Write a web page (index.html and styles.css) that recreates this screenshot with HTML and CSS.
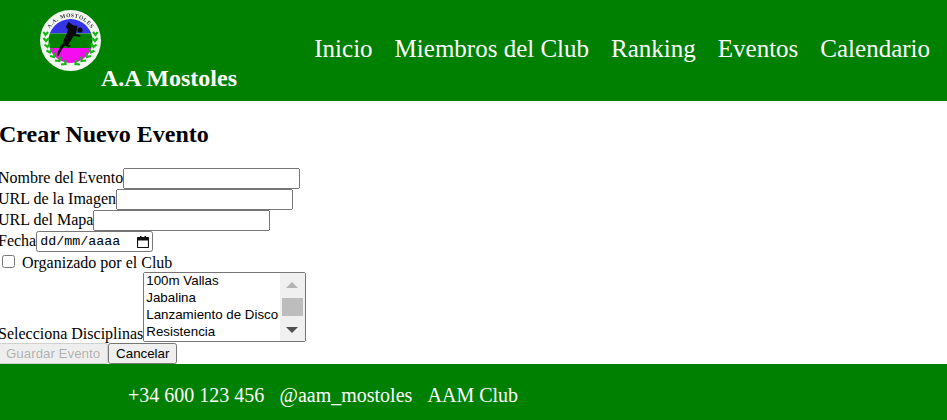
FILE: index.html
```html
<!DOCTYPE html>
<html lang="es">
<head>
<meta charset="utf-8">
<title>A.A Mostoles</title>
<link rel="stylesheet" href="styles.css">
</head>
<body>
<header class="site-header">
  <div class="brand">
    <svg class="logo" viewBox="0 0 61 61" width="61" height="61" aria-hidden="true">
      <circle cx="30.500" cy="30.500" r="30.500" fill="#f4f6f2"/>
      <clipPath id="disc"><circle cx="30.500" cy="31" r="22"/></clipPath>
      <g clip-path="url(#disc)">
        <rect x="8" y="9" width="46" height="14.500" fill="#3434e8"/>
        <rect x="8" y="23.500" width="46" height="14.500" fill="#008000"/>
        <rect x="8" y="38" width="46" height="16" fill="#f50cf0"/>
      </g>
      <g fill="#080808">
        <circle cx="40" cy="20" r="2.600"/>
        <path d="M27.500 13.500l1.200-1.500 4.300 3.200 4.500 .8-.5 2.500-1 5.500 4.500 1-.6 1.800-6.400-.8-2.800 5-2.500 3.500 2.500 1.200-.8 1.500-5-1.600-2.500 3-2.600 4.600-1.200 3-1.200-.4 .6-4.200 2.300-5 2.500-3.200 1.200-4.500 3-6 1-3.600-2.200-2.200z"/>
      </g>
      <g class="laurel" fill="none" stroke="#14b814" stroke-width="2.200">
        <path d="M3.500 22l2 3 2.500-3M3.500 28l2.500 3 3-3M4.500 34.500l3 2.500 2.500-3.500M6.500 40.500l3.500 2 2-4M10 46l4 1 1-4.500M15 50.500l4.500 .5 .5-4.500M21 54.500l4.500-.5-.5-4"/>
        <path d="M57.500 22l-2 3-2.500-3M57.500 28l-2.500 3-3-3M56.500 34.500l-3 2.500-2.500-3.500M54.500 40.500l-3.500 2-2-4M51 46l-4 1-1-4.500M46 50.500l-4.500 .5-.5-4.500M40 54.500l-4.500-.5 .5-4"/>
      </g>
      <path id="arc" d="M6.500 31a24 24 0 0 1 48 0" fill="none"/>
      <text class="logo-text"><textPath href="#arc" startOffset="50%" text-anchor="middle">A.A. MOSTOLES</textPath></text>
    </svg>
    <span class="brand-name">A.A Mostoles</span>
  </div>
  <nav class="main-nav">
    <a href="#">Inicio</a>
    <a href="#">Miembros del Club</a>
    <a href="#">Ranking</a>
    <a href="#">Eventos</a>
    <a href="#">Calendario</a>
  </nav>
</header>
<main class="content">
  <h2 class="page-title">Crear Nuevo Evento</h2>
  <form class="event-form">
    <div><label for="n">Nombre del Evento</label><input id="n" class="text-field" type="text"></div>
    <div><label for="u">URL de la Imagen</label><input id="u" class="text-field" type="text"></div>
    <div><label for="m">URL del Mapa</label><input id="m" class="text-field" type="text"></div>
    <div><label for="f">Fecha</label><span class="date-field"><input id="f" class="date-input" type="text" placeholder="dd/mm/aaaa"><svg class="cal-icon" viewBox="0 0 12 12" width="12" height="12" aria-hidden="true"><path d="M1 1.500h10a.5 .5 0 0 1 .5 .5v9a.5 .5 0 0 1-.5 .5H1a.5 .5 0 0 1-.5-.5V2a.5 .5 0 0 1 .5-.5z" fill="none" stroke="#111" stroke-width="1.200"/><rect x="0.500" y="1.500" width="11" height="3" fill="#111"/><rect x="3" y="0" width="1.500" height="2" fill="#111"/><rect x="7.500" y="0" width="1.500" height="2" fill="#111"/></svg></span></div>
    <div><label><input type="checkbox"> Organizado por el Club</label></div>
    <div class="list-row">
      <label for="d">Selecciona Disciplinas</label><select id="d" class="list-field" multiple size="4">
        <option>100m Vallas</option>
        <option>Jabalina</option>
        <option>Lanzamiento de Disco</option>
        <option>Resistencia</option>
        <option>Salto de Altura</option>
        <option>Salto de Longitud</option>
        <option>Velocidad</option>
        <option>Marcha</option>
      </select><span class="fake-scroll" aria-hidden="true"><i class="arrow-up"></i><i class="thumb"></i><i class="arrow-down"></i></span>
    </div>
    <div><button type="submit" disabled>Guardar Evento</button><button type="button">Cancelar</button></div>
  </form>
</main>
<footer class="site-footer">
  <span>+34 600 123 456</span>
  <span>@aam_mostoles</span>
  <span>AAM Club</span>
</footer>
</body>
</html>
```
FILE: styles.css
```css
html, body {
  margin: 0;
  padding: 0;
}
body {
  font-family: "Liberation Serif", serif;
  font-size: 16px;
  color: #000;
  background: #fff;
}
.site-header {
  height: 101px;
  background: #008000;
  color: #fff;
  display: flex;
  justify-content: space-between;
}
.brand {
  display: flex;
  align-items: flex-start;
  padding-left: 40px;
}
.logo {
  display: block;
  margin-top: 10px;
  flex: none;
  filter: blur(.3px);
}
.logo-text {
  font-family: "Liberation Serif", serif;
  font-size: 5.500px;
  font-weight: bold;
  fill: #333;
  letter-spacing: .5px;
}
.brand-name {
  font-size: 24px;
  font-weight: bold;
  margin-top: 64px;
  line-height: 28px;
}
.main-nav {
  display: flex;
  gap: 22px;
  padding: 34px 17px 0 0;
}
.main-nav a {
  color: #fff;
  text-decoration: none;
  font-size: 25px;
  line-height: 29px;
}
.content {
  height: 263px;
  overflow: hidden;
}
.page-title {
  font-size: 24px;
  font-weight: bold;
  margin: 19px 0 20px -1px;
  line-height: 28px;
}
.event-form {
  margin-left: -2px;
}
.text-field {
  width: 177px;
  box-sizing: border-box;
}
.date-field {
  display: inline-flex;
  align-items: center;
  box-sizing: border-box;
  width: 117px;
  height: 21px;
  border: 1px solid #767676;
  border-radius: 2.500px;
  vertical-align: 1px;
}
.date-input {
  width: 96px;
  box-sizing: border-box;
  border: 0;
  padding: 0 0 0 3px;
  outline: 0;
  font-family: "Liberation Mono", monospace;
  font-size: 13.333px;
}
.date-input::placeholder {
  color: #000;
  opacity: 1;
}
.cal-icon {
  margin-left: 4px;
  flex: none;
}
.list-row {
  position: relative;
}
.list-field {
  width: 163px;
}
.fake-scroll {
  position: absolute;
  top: 1px;
  left: 282px;
  width: 25px;
  height: 68px;
  background: #f0f0f0;
}
.thumb {
  position: absolute;
  left: 2px;
  right: 2px;
  top: 25px;
  height: 18px;
  background: #bdbdbd;
}
.arrow-up,
.arrow-down {
  position: absolute;
  left: 6px;
  width: 0;
  height: 0;
  border-left: 6px solid transparent;
  border-right: 6px solid transparent;
}
.arrow-up {
  top: 9px;
  border-bottom: 6px solid #b4b4b4;
}
.arrow-down {
  bottom: 8px;
  border-top: 6px solid #505050;
}
.site-footer {
  height: 56px;
  box-sizing: border-box;
  padding: 6px 0 0 128px;
  background: #008000;
  color: #fff;
  display: flex;
  align-items: center;
  gap: 15.200px;
  font-size: 20px;
}
```
